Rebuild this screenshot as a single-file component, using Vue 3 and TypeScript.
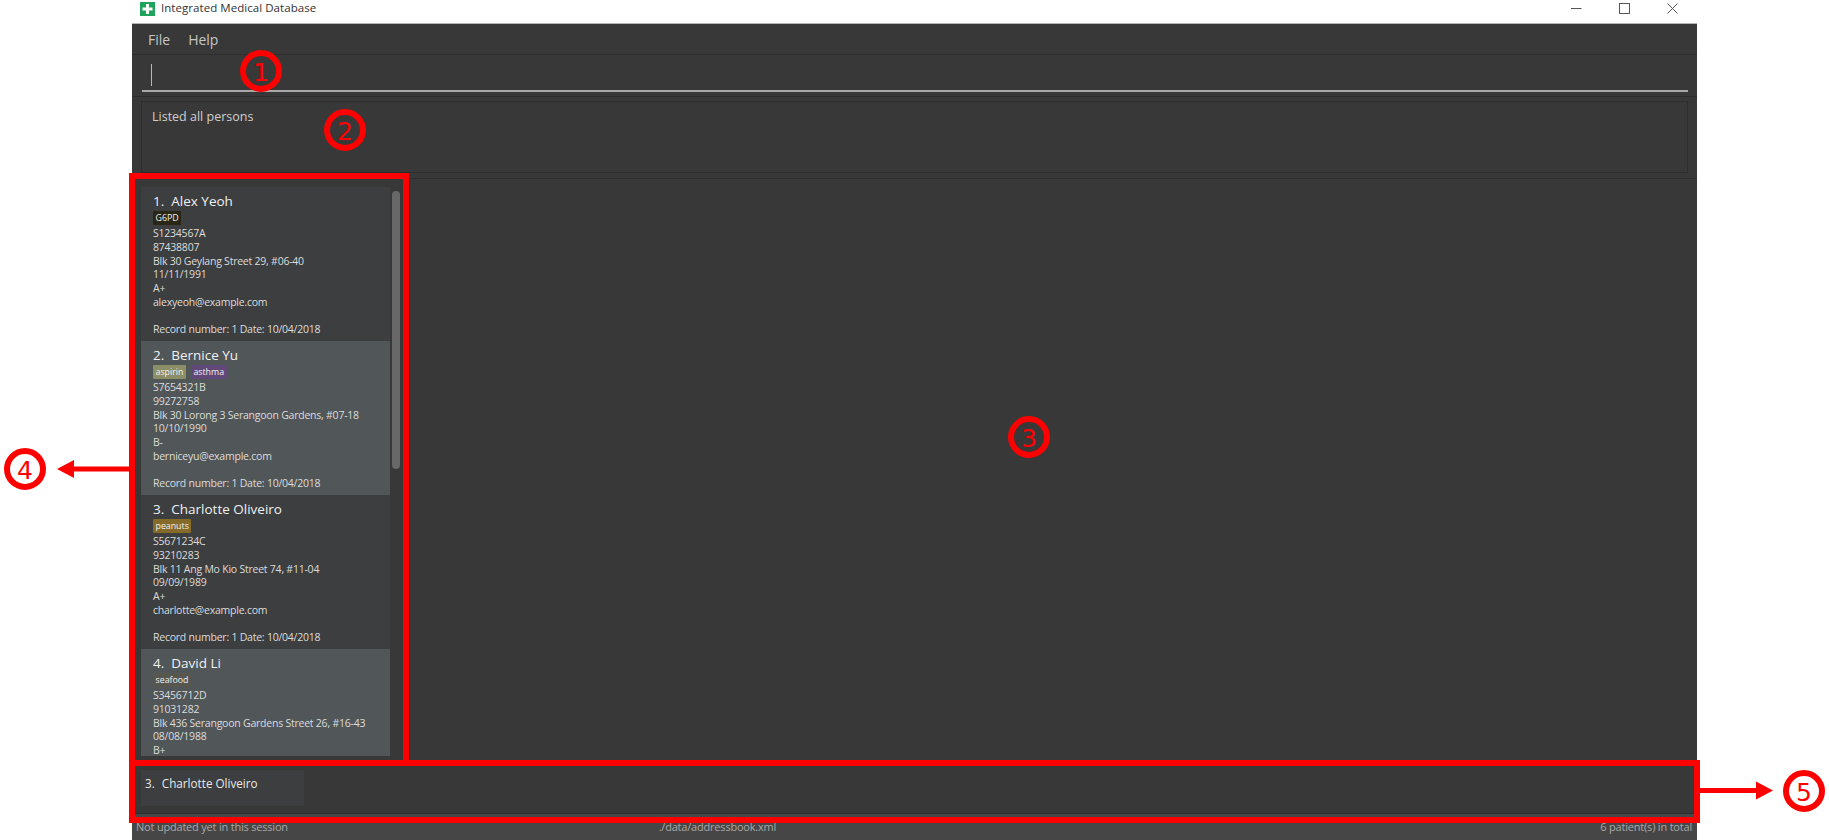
<template>
  <div class="screen">
    <header class="title-bar">
      <svg class="app-icon" width="15" height="14" viewBox="0 0 15 14">
        <rect width="15" height="14" fill="#1fa35c" />
        <path d="M6 2h3v3.5h3.500v3H9V12H6V8.500H2.500v-3H6z" fill="#fff" />
      </svg>
      <span class="app-title">Integrated Medical Database</span>
      <div class="win-buttons">
        <svg width="11" height="11" viewBox="0 0 11 11"><path d="M0 5.500h10.500" stroke="#555" fill="none" /></svg>
        <svg width="11" height="11" viewBox="0 0 11 11"><rect x="0.500" y="0.500" width="10" height="10" stroke="#555" fill="none" /></svg>
        <svg width="11" height="11" viewBox="0 0 11 11"><path d="M0.500 0.500l10 10M10.500 0.500l-10 10" stroke="#555" fill="none" /></svg>
      </div>
    </header>

    <div class="app">
      <nav class="menu-bar">
        <span>File</span>
        <span>Help</span>
      </nav>

      <div class="command">
        <div class="command-input"><i class="caret"></i></div>
      </div>

      <div class="result-wrap">
        <div class="result">Listed all persons</div>
      </div>

      <div class="main">
        <div class="list-pane">
          <div class="list">
            <article v-for="(p, i) in persons" :key="p.name" class="card" :class="{ even: i % 2 === 1 }">
              <h3 class="name"><span class="idx">{{ i + 1 }}.</span>{{ p.name }}</h3>
              <div class="tags">
                <span v-for="t in p.tags" :key="t.label" class="tag" :class="t.kind">{{ t.label }}</span>
              </div>
              <p>{{ p.nric }}</p>
              <p>{{ p.phone }}</p>
              <p>{{ p.address }}</p>
              <p>{{ p.dob }}</p>
              <p>{{ p.blood }}</p>
              <p>{{ p.email }}</p>
              <p class="record">Record number: 1 Date: 10/04/2018</p>
            </article>
          </div>
          <div class="scroll-track"><div class="scroll-thumb"></div></div>
        </div>
        <div class="browser"></div>
      </div>

      <div class="selected">
        <div class="selected-card"><span class="idx">3.</span>Charlotte Oliveiro</div>
      </div>

      <footer class="status">
        <span class="status-left">Not updated yet in this session</span>
        <span class="status-mid">./data/addressbook.xml</span>
        <span class="status-right">6 patient(s) in total</span>
      </footer>
    </div>

    <!-- red annotations drawn over the screenshot -->
    <svg class="notes" width="1829" height="840" viewBox="0 0 1829 840">
      <g fill="none" stroke="#f00" stroke-width="6">
        <rect x="132" y="176" width="274" height="587" />
        <rect x="132" y="763" width="1565" height="57" />
        <circle v-for="n in notes" :key="n.label" :cx="n.x" :cy="n.y" r="18" />
      </g>
      <g fill="#f00">
        <path d="M129 466.500H74V460L57 469l17 9v-6.500h55z" />
        <path d="M1700 788H1756V781.500L1773 790.500l-17 9V793H1700z" />
        <text v-for="n in notes" :key="n.label" :x="n.x" :y="n.y + 10" class="note-num">{{ n.label }}</text>
      </g>
    </svg>
  </div>
</template>

<script setup lang="ts">
interface Tag {
  label: string
  kind: string
}

interface Person {
  name: string
  tags: Tag[]
  nric: string
  phone: string
  address: string
  dob: string
  blood: string
  email: string
}

const persons: Person[] = [
  {
    name: 'Alex Yeoh',
    tags: [{ label: 'G6PD', kind: 'dark' }],
    nric: 'S1234567A',
    phone: '87438807',
    address: 'Blk 30 Geylang Street 29, #06-40',
    dob: '11/11/1991',
    blood: 'A+',
    email: 'alexyeoh@example.com',
  },
  {
    name: 'Bernice Yu',
    tags: [
      { label: 'aspirin', kind: 'olive' },
      { label: 'asthma', kind: 'purple' },
    ],
    nric: 'S7654321B',
    phone: '99272758',
    address: 'Blk 30 Lorong 3 Serangoon Gardens, #07-18',
    dob: '10/10/1990',
    blood: 'B-',
    email: 'berniceyu@example.com',
  },
  {
    name: 'Charlotte Oliveiro',
    tags: [{ label: 'peanuts', kind: 'gold' }],
    nric: 'S5671234C',
    phone: '93210283',
    address: 'Blk 11 Ang Mo Kio Street 74, #11-04',
    dob: '09/09/1989',
    blood: 'A+',
    email: 'charlotte@example.com',
  },
  {
    name: 'David Li',
    tags: [{ label: 'seafood', kind: 'grey' }],
    nric: 'S3456712D',
    phone: '91031282',
    address: 'Blk 436 Serangoon Gardens Street 26, #16-43',
    dob: '08/08/1988',
    blood: 'B+',
    email: 'lidavid@example.com',
  },
]

const notes = [
  { label: '1', x: 261, y: 71 },
  { label: '2', x: 345, y: 130 },
  { label: '3', x: 1029, y: 437 },
  { label: '4', x: 25, y: 469 },
  { label: '5', x: 1804, y: 791 },
]
</script>

<style scoped>
.screen {
  position: relative;
  width: 1829px;
  height: 840px;
  overflow: hidden;
  background: #fff;
  font-family: "Open Sans", "Noto Sans", sans-serif;
}

.title-bar {
  display: flex;
  align-items: center;
  height: 23px;
  padding: 0 0 6px 140px;
  box-sizing: border-box;
  color: #333;
  font-size: 11.5px;
}

.app-icon {
  margin-right: 6px;
}

.app-title {
  letter-spacing: 0.05px;
  margin-top: -2px;
}

.win-buttons {
  display: flex;
  gap: 37px;
  margin-left: auto;
  margin-right: 151px;
  margin-top: -1px;
}

.app {
  display: flex;
  flex-direction: column;
  width: 1565px;
  height: 817px;
  margin-left: 132px;
  border-top: 1px solid #b4b4b4;
  box-sizing: border-box;
  background: #383838;
  color: #d4d4d4;
}

.menu-bar {
  display: flex;
  gap: 18px;
  height: 31px;
  padding-left: 16px;
  align-items: center;
  box-sizing: border-box;
  border-bottom: 1px solid #2e2e2e;
  font-size: 14px;
  color: #c6c6c6;
}

.command {
  height: 42px;
  padding: 0 9px 0 10px;
  box-sizing: border-box;
  border-bottom: 1px solid #2c2c2c;
}

.command-input {
  height: 37px;
  padding: 9px 0 0 9px;
  box-sizing: border-box;
  border-bottom: 2px solid #a8a8a8;
}

.caret {
  display: block;
  width: 1px;
  height: 22px;
  background: #b8b8b8;
}

.result-wrap {
  height: 82px;
  padding: 4px 9px 5px 9px;
  box-sizing: border-box;
  border-bottom: 1px solid #2e2e2e;
}

.result {
  height: 72px;
  padding: 6px 10px;
  box-sizing: border-box;
  border: 1px solid #2e2e2e;
  font-size: 12.5px;
  color: #cfcfcf;
}

.main {
  display: flex;
  height: 583px;
}

.list-pane {
  display: flex;
  width: 278px;
  padding: 8px 0 6px 9px;
  box-sizing: border-box;
  border-right: 1px solid #2c2c2c;
}

.list {
  width: 249px;
  overflow: hidden;
  font-size: 10.500px;
  letter-spacing: -0.23px;
  line-height: 13.800px;
}

.card {
  height: 154px;
  padding: 6px 12px 0;
  box-sizing: border-box;
  background: #3c3e3f;
  color: #dcdcdc;
}

.card.even {
  background: #515658;
}

.card p {
  margin: 0;
  white-space: nowrap;
}

.card .record {
  margin-top: 13px;
}

.name {
  margin: 0;
  font-size: 13.500px;
  font-weight: 500;
  letter-spacing: 0;
  line-height: 17px;
  color: #f0f0f0;
}

.idx {
  margin-right: 7px;
}

.tags {
  display: flex;
  gap: 5px;
  height: 16px;
  margin-top: 1px;
}

.tag {
  height: 14px;
  padding: 0 2.500px;
  font-size: 8.800px;
  letter-spacing: 0;
  line-height: 14px;
  border-radius: 1px;
  color: #f2f2f2;
}

.tag.dark { background: #2a2615; }
.tag.olive { background: #8b8e66; }
.tag.purple { background: #614878; }
.tag.gold { background: #856a2a; }
.tag.grey { background: #58574f; }

.scroll-track {
  flex: 1;
  padding: 4px 3px 0 2px;
}

.scroll-thumb {
  width: 8px;
  height: 278px;
  border-radius: 4px;
  background: #686868;
}

.browser {
  flex: 1;
}

.selected {
  flex: 1;
  padding: 8px 0 0 9px;
  border-bottom: 1px solid #2c2c2c;
}

.selected-card {
  width: 163px;
  height: 36px;
  padding: 5px 4px;
  box-sizing: border-box;
  background: #3c3e3f;
  color: #e8e8e8;
  font-size: 11.700px;
  line-height: 17px;
}

.status {
  display: grid;
  grid-template-columns: 1fr 1fr 1fr;
  height: 26px;
  padding: 0 5px 2px 4px;
  align-items: center;
  box-sizing: border-box;
  background: #464646;
  color: #a8a8a8;
  font-size: 11px;
  letter-spacing: -0.2px;
}

.status-mid {
  text-align: left;
  padding-left: 4px;
}

.status-right {
  text-align: right;
}

.notes {
  position: absolute;
  left: 0;
  top: 0;
  pointer-events: none;
}

.note-num {
  font-family: "DejaVu Sans", sans-serif;
  font-size: 25px;
  text-anchor: middle;
}
</style>
